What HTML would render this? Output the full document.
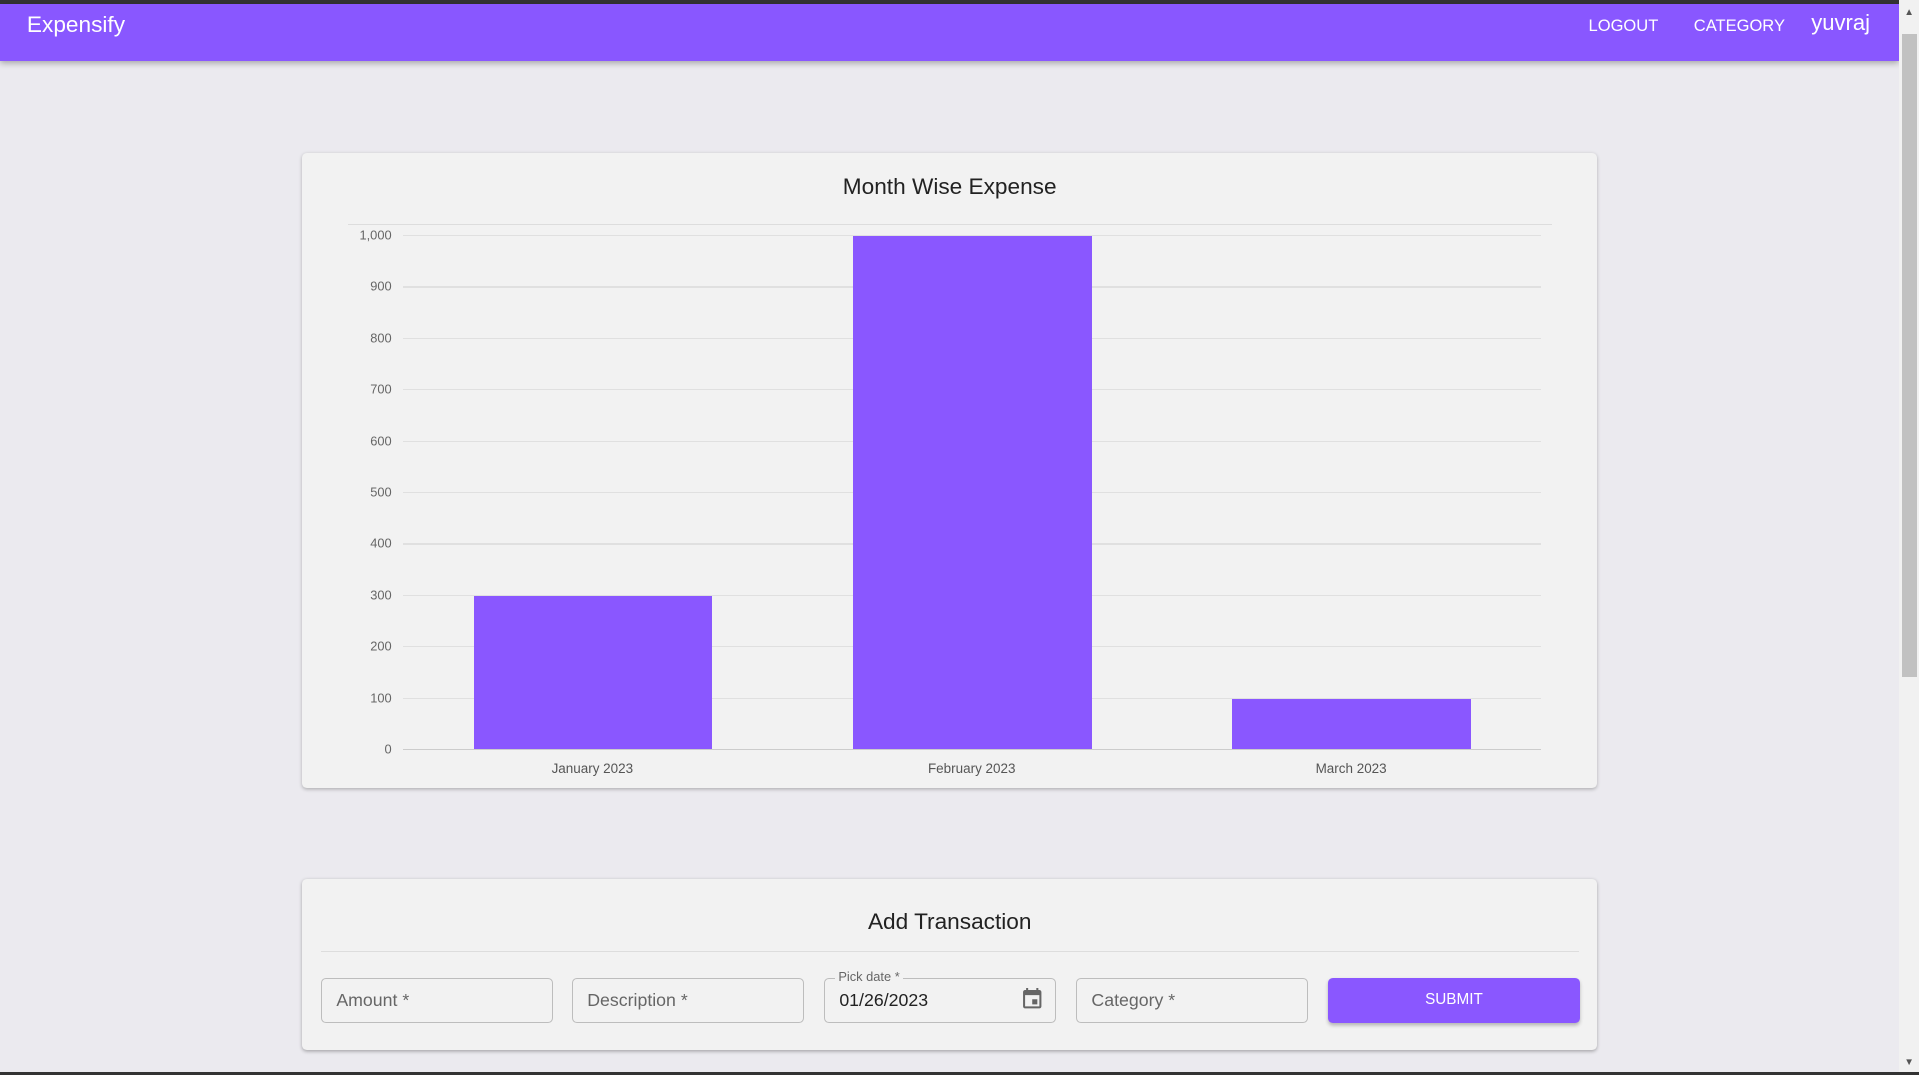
<!DOCTYPE html>
<html><head><style>
html,body{margin:0;padding:0;overflow:hidden}
body{width:1568px;height:878px;zoom:1.22385;background:#ebeaef;font-family:"Liberation Sans",Arial,sans-serif;position:relative}
.abs{position:absolute}
.bar{background:#8a57ff}
.grid{position:absolute;left:329px;width:930px;height:1px;background:#e0e0e0}
.yl{position:absolute;right:1248px;font-size:10.5px;color:#666;transform:translateY(-6px)}
.xl{position:absolute;top:622px;font-size:11px;color:#555;width:200px;text-align:center}
.fld{position:absolute;top:799px;height:37px;width:190px;border:1px solid #bdbdbd;border-radius:4px;box-sizing:border-box;font-size:14.5px;color:#666;padding:9px 12px}
</style></head><body>
<div class="abs" style="left:0;top:0;width:1568px;height:3px;background:#333"></div>
<div class="abs" style="left:0;top:3px;width:1552px;height:47px;background:#8957ff;box-shadow:0 2px 5px rgba(0,0,0,.3);color:#fff">
 <div class="abs" style="left:22px;top:7px;font-size:18.5px">Expensify</div>
 <div class="abs" style="left:1298px;top:10px;font-size:13.5px">LOGOUT</div>
 <div class="abs" style="left:1384px;top:10px;font-size:13.5px">CATEGORY</div>
 <div class="abs" style="left:1480px;top:5px;font-size:18px">yuvraj</div>
</div>
<div class="abs" style="left:1552px;top:0;width:16px;height:878px;background:#f1f1f1"></div>
<div class="abs" style="left:1554px;top:28px;width:12px;height:525px;background:#c1c1c1"></div>
<div class="abs" style="left:1556px;top:6px;font-size:8px;color:#555">▲</div>
<div class="abs" style="left:1556px;top:864px;font-size:8px;color:#555">▼</div>
<div class="abs" style="left:0;top:876px;width:1568px;height:2px;background:#333"></div>

<div class="abs" style="left:247px;top:125px;width:1058px;height:519px;background:#f2f2f2;border-radius:4px;box-shadow:0 1px 3px rgba(0,0,0,.25)"></div>
<div class="abs" style="left:247px;top:142px;width:1058px;text-align:center;font-size:18.5px;color:#222">Month Wise Expense</div>
<div class="abs" style="left:284px;top:183px;width:984px;height:1px;background:#ddd"></div>
<div class="grid" style="top:192px"></div><div class="yl" style="top:192px">1,000</div>
<div class="grid" style="top:234px"></div><div class="yl" style="top:234px">900</div>
<div class="grid" style="top:276px"></div><div class="yl" style="top:276px">800</div>
<div class="grid" style="top:318px"></div><div class="yl" style="top:318px">700</div>
<div class="grid" style="top:360px"></div><div class="yl" style="top:360px">600</div>
<div class="grid" style="top:402px"></div><div class="yl" style="top:402px">500</div>
<div class="grid" style="top:444px"></div><div class="yl" style="top:444px">400</div>
<div class="grid" style="top:486px"></div><div class="yl" style="top:486px">300</div>
<div class="grid" style="top:528px"></div><div class="yl" style="top:528px">200</div>
<div class="grid" style="top:570px"></div><div class="yl" style="top:570px">100</div>
<div class="grid" style="top:612px;background:#ccc"></div><div class="yl" style="top:612px">0</div>
<div class="abs bar" style="left:387px;top:487px;width:195px;height:125px"></div>
<div class="abs bar" style="left:697px;top:193px;width:195px;height:419px"></div>
<div class="abs bar" style="left:1007px;top:571px;width:195px;height:41px"></div>
<div class="xl" style="left:384px">January 2023</div>
<div class="xl" style="left:694px">February 2023</div>
<div class="xl" style="left:1004px">March 2023</div>

<div class="abs" style="left:247px;top:718px;width:1058px;height:140px;background:#f2f2f2;border-radius:4px;box-shadow:0 1px 3px rgba(0,0,0,.3)"></div>
<div class="abs" style="left:247px;top:743px;width:1058px;text-align:center;font-size:18.5px;color:#222">Add Transaction</div>
<div class="abs" style="left:262px;top:777px;width:1028px;height:1px;background:#ddd"></div>
<div class="fld" style="left:262px">Amount *</div>
<div class="fld" style="left:467px">Description *</div>
<div class="fld" style="left:673px;color:#222">01/26/2023
 <svg class="abs" style="left:160px;top:7px" width="20" height="20" viewBox="0 0 24 24"><path fill="#666" d="M17 12h-5v5h5v-5zM16 1v2H8V1H6v2H5c-1.1 0-2 .9-2 2v14c0 1.1.9 2 2 2h14c1.1 0 2-.9 2-2V5c0-1.1-.9-2-2-2h-1V1h-2zm3 18H5V8h14v11z"/></svg>
</div>
<div class="abs" style="left:682px;top:792px;font-size:10.5px;color:#666;background:#f2f2f2;padding:0 3px">Pick date *</div>
<div class="fld" style="left:879px">Category *</div>
<div class="abs" style="left:1085px;top:799px;width:206px;height:37px;background:#8a57ff;border-radius:4px;box-shadow:0 2px 3px rgba(0,0,0,.25);color:#fff;font-size:12.5px;text-align:center;line-height:36px">SUBMIT</div>
</body></html>
